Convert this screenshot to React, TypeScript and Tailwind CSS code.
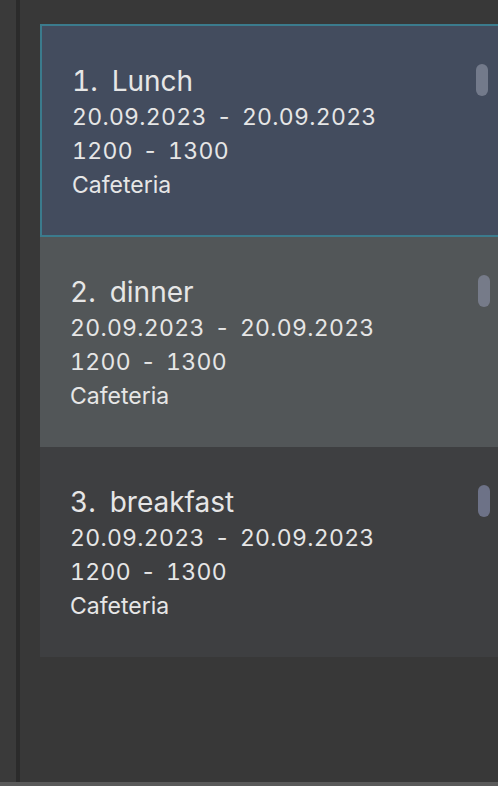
type Meal = {
  id: number;
  name: string;
  start: string;
  end: string;
  from: string;
  to: string;
  place: string;
};

const meals: Meal[] = [
  { id: 1, name: 'Lunch', start: '20.09.2023', end: '20.09.2023', from: '1200', to: '1300', place: 'Cafeteria' },
  { id: 2, name: 'dinner', start: '20.09.2023', end: '20.09.2023', from: '1200', to: '1300', place: 'Cafeteria' },
  { id: 3, name: 'breakfast', start: '20.09.2023', end: '20.09.2023', from: '1200', to: '1300', place: 'Cafeteria' },
];

const cardStyles: Record<number, string> = {
  1: 'h-[213px] border-2 border-[#3b7b8d] bg-[#434c5e]',
  2: 'h-[210px] bg-[#525658]',
  3: 'h-[210px] bg-[#3e3f41]',
};

const pillStyles: Record<number, string> = {
  1: 'bg-[#737a8b]',
  2: 'bg-[#767b89]',
  3: 'bg-[#6d7287]',
};

const Range = ({ a, b }: { a: string; b: string }) => (
  <p className="flex text-[23px] leading-[34px] tracking-[0.3px] tabular-nums">
    <span>{a}</span>
    <span className="mx-[10px]">-</span>
    <span>{b}</span>
  </p>
);

const MealCard = ({ meal }: { meal: Meal }) => {
  return (
    <div className={`flex w-[480px] shrink-0 ${cardStyles[meal.id]}`}>
      <div className="flex-1 pl-[30px] pt-[37px] text-[#e6e6e6]">
        <p className="flex text-[28px] leading-[37px] tabular-nums">
          <span>{meal.id}.</span>
          <span className="ml-[14px]">{meal.name}</span>
        </p>
        <Range a={meal.start} b={meal.end} />
        <Range a={meal.from} b={meal.to} />
        <p className="text-[23px] leading-[34px]">{meal.place}</p>
      </div>
      <div className={`mt-[38px] mr-[30px] h-[32px] w-[12px] rounded-[6px] ${pillStyles[meal.id]}`} />
    </div>
  );
};

export default function App() {
  return (
    <div
      className="flex h-[786px] w-full flex-col overflow-hidden bg-[#383838]"
      style={{ fontFamily: 'Inter, "Noto Sans", sans-serif' }}
    >
      <div className="flex min-h-0 flex-1">
        <div className="w-[16px] bg-[#3a3a3a]" />
        <div className="w-[4px] bg-[#2b2b2b]" />
        <div className="flex min-w-0 flex-1 flex-col pl-[20px] pt-[24px]">
          {meals.map((meal) => (
            <MealCard key={meal.id} meal={meal} />
          ))}
        </div>
      </div>
      <div className="h-[4px] bg-[#5a5a5a]" />
    </div>
  );
}
